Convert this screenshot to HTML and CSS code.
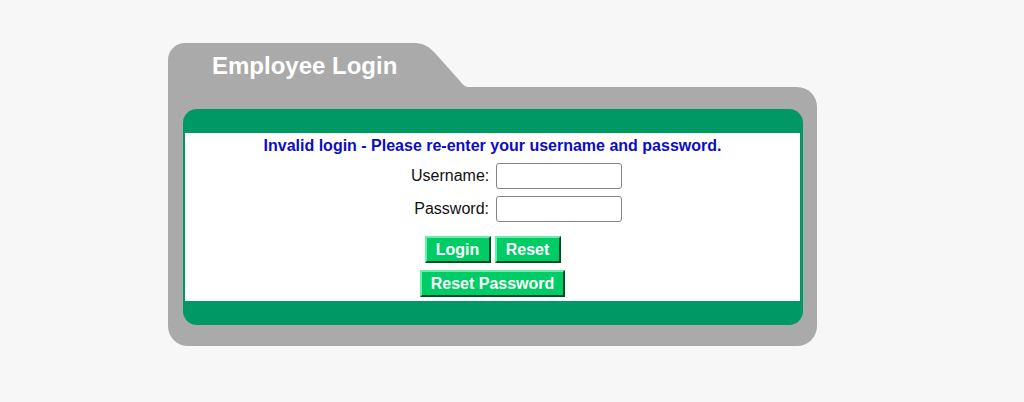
FILE: index.html
```html
<!DOCTYPE html>
<html lang="en">
<head>
<meta charset="utf-8">
<title>Employee Login</title>
<link rel="stylesheet" href="styles.css">
</head>
<body>
<div class="folder">
  <div class="tab-row">
    <div class="tab-label">Employee Login</div>
    <svg class="tab-slant" width="56" height="44" viewBox="0 0 56 44" aria-hidden="true">
      <path d="M0 0 C10 0 15 4 20 9 L46 38 C49 42 51 44 56 44 L0 44 Z" fill="#aaaaaa"/>
    </svg>
  </div>
  <div class="folder-body">
    <div class="panel">
      <form class="panel-inner">
        <p class="error">Invalid login - Please re-enter your username and password.</p>
        <div class="fields">
          <label class="field-label" for="u">Username:</label>
          <input class="field-input" id="u" type="text">
          <label class="field-label" for="p">Password:</label>
          <input class="field-input" id="p" type="password">
        </div>
        <div class="btn-row">
          <button type="button" class="btn btn-small">Login</button>
          <button type="button" class="btn btn-small">Reset</button>
        </div>
        <div class="btn-row">
          <button type="button" class="btn">Reset Password</button>
        </div>
      </form>
    </div>
  </div>
</div>
</body>
</html>
```

FILE: styles.css
```css
html, body {
  margin: 0;
  padding: 0;
}
body {
  background: #f7f7f7;
  font-family: "Liberation Sans", Arial, sans-serif;
  height: 402px;
  overflow: hidden;
}
.folder {
  margin: 43px 0 0 168px;
  width: 649px;
}
.tab-row {
  display: flex;
  height: 44px;
}
.tab-label {
  width: 247px;
  height: 44px;
  box-sizing: border-box;
  background: #aaaaaa;
  border-top-left-radius: 17px;
  padding: 9px 0 0 44px;
  color: #ffffff;
  font-weight: bold;
  font-size: 24px;
  white-space: nowrap;
}
.tab-slant {
  display: block;
  margin-left: -1px;
}
.folder-body {
  background: #aaaaaa;
  height: 259px;
  box-sizing: border-box;
  padding: 22px 14px 21px 15px;
  border-radius: 0 20px 20px 20px;
}
.panel {
  background: #009966;
  border-radius: 14px;
  height: 216px;
  box-sizing: border-box;
  padding: 24px 3px 24px 2px;
}
.panel-inner {
  background: #ffffff;
  height: 168px;
  margin: 0;
  box-sizing: border-box;
  padding-top: 4px;
  display: flex;
  flex-direction: column;
  align-items: center;
}
.error {
  margin: 0;
  color: #0c0cc4;
  font-weight: bold;
  font-size: 16px;
  line-height: 18px;
}
.fields {
  display: grid;
  grid-template-columns: 78px 126px;
  column-gap: 7px;
  row-gap: 7px;
  align-items: center;
  margin-top: 8px;
  padding-left: 48px;
}
.field-label {
  text-align: right;
  font-size: 16px;
  color: #111111;
  white-space: nowrap;
}
.field-input {
  width: 126px;
  height: 26px;
  box-sizing: border-box;
  border: 1px solid #858585;
  border-radius: 3px;
  background: #ffffff;
  margin: 0;
  padding: 0 4px;
  font-size: 14px;
  font-family: inherit;
}
.btn-row {
  display: flex;
  gap: 4px;
  margin-top: 7px;
}
.fields + .btn-row {
  margin-top: 14px;
}
.btn {
  height: 27px;
  box-sizing: border-box;
  margin: 0;
  padding: 0 9px;
  background: #00cc66;
  color: #ffffff;
  font-family: inherit;
  font-weight: bold;
  font-size: 16px;
  line-height: 23px;
  border: 2px solid;
  border-color: #66eeaa #004d26 #004d26 #66eeaa;
  border-radius: 0;
  cursor: pointer;
  white-space: nowrap;
}
.btn-small {
  width: 66px;
}
```
